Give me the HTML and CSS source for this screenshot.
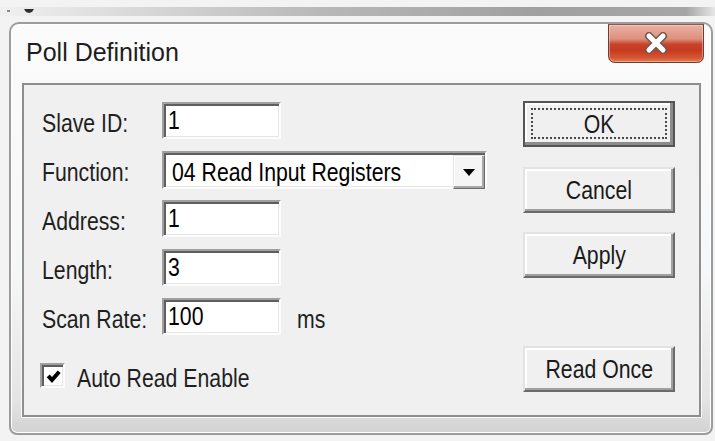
FILE: index.html
```html
<!DOCTYPE html>
<html lang="en">
<head>
<meta charset="utf-8">
<title>Poll Definition</title>
<link rel="stylesheet" href="styles.css">
</head>
<body>
<div class="desk">
  <div class="strip">
    <div class="strip-bar">
      <svg class="strip-icons" width="30" height="6" viewBox="0 0 30 6" aria-hidden="true">
        <rect x="0" y="2" width="3" height="2" fill="#8a8a8a"/>
        <path d="M17 1 L27 1 L25 4 L22 5 L19 4 Z" fill="#2e2e2e"/>
      </svg>
    </div>
  </div>

  <div class="window">
    <div class="titlebar">
      <span class="title">Poll Definition</span>
      <button class="close" type="button" aria-label="Close">
        <svg width="26" height="22" viewBox="0 0 26 22" aria-hidden="true">
          <path d="M6 4 L20 18 M20 4 L6 18" stroke="#6b5a58" stroke-width="8" stroke-linecap="round"/>
          <path d="M6 4 L20 18 M20 4 L6 18" stroke="#ffffff" stroke-width="5" stroke-linecap="round"/>
        </svg>
      </button>
    </div>

    <div class="client">
      <div class="form">
        <div class="row">
          <span class="lbl"><span class="t">Slave ID:</span></span>
          <div class="edit"><span class="t">1</span></div>
        </div>
        <div class="row">
          <span class="lbl"><span class="t">Function:</span></span>
          <div class="combo">
            <span class="combo-text"><span class="t">04 Read Input Registers</span></span>
            <span class="combo-btn">
              <svg width="12" height="7" viewBox="0 0 12 7" aria-hidden="true"><path d="M0 0 H12 L6 7 Z" fill="#000"/></svg>
            </span>
          </div>
        </div>
        <div class="row">
          <span class="lbl"><span class="t">Address:</span></span>
          <div class="edit"><span class="t">1</span></div>
        </div>
        <div class="row">
          <span class="lbl"><span class="t">Length:</span></span>
          <div class="edit"><span class="t">3</span></div>
        </div>
        <div class="row">
          <span class="lbl"><span class="t">Scan Rate:</span></span>
          <div class="edit"><span class="t">100</span></div>
          <span class="unit"><span class="t">ms</span></span>
        </div>
        <div class="check-row">
          <span class="checkbox">
            <svg width="17" height="17" viewBox="0 0 17 17" aria-hidden="true"><path d="M3.2 7.8 L7 12 L14.2 3.8" fill="none" stroke="#000" stroke-width="4"/></svg>
          </span>
          <span class="check-label"><span class="t">Auto Read Enable</span></span>
        </div>
      </div>

      <div class="buttons">
        <button class="btn default" type="button"><span class="t">OK</span></button>
        <button class="btn cancel" type="button"><span class="t">Cancel</span></button>
        <button class="btn apply" type="button"><span class="t">Apply</span></button>
        <button class="btn read-once" type="button"><span class="t">Read Once</span></button>
      </div>
    </div>
  </div>
</div>
</body>
</html>
```

FILE: styles.css
```css
* { box-sizing: border-box; }

html, body {
  margin: 0;
  padding: 0;
}

body {
  width: 715px;
  height: 441px;
  overflow: hidden;
  background: #f3f3f3;
  font-family: "Liberation Sans", Arial, sans-serif;
  font-size: 25px;
  color: #1c1c1c;
}

/* dialog font is a tall, narrow sans: squeeze each run horizontally */
.t {
  display: inline-block;
  white-space: nowrap;
  transform: scaleX(0.85);
  transform-origin: 0 50%;
}

/* parent application strip behind the dialog */
.strip {
  height: 22px;
  padding-top: 7px;
}

.strip-bar {
  height: 9px;
  background: linear-gradient(90deg, #f0f0f0 0%, #dadada 18%, #b8b8b8 45%, #a0a0a0 75%, #a6a6a6 96%, #e6e6e6 100%);
  padding: 1px 0 0 7px;
}

.strip-icons { display: block; }

/* dialog window frame */
.window {
  margin-left: 9px;
  width: 704px;
  height: 413px;
  border: 2px solid #9c9c9c;
  border-radius: 10px 10px 8px 8px;
  background: linear-gradient(180deg, #fbfbfc 0%, #f6f7f8 60%, #e4e4e4 92%, #d2d2d2 100%);
  box-shadow: inset 0 0 0 1px #ffffff;
  padding: 0 10px 0 11px;
  display: flex;
  flex-direction: column;
}

.titlebar {
  height: 59px;
  display: flex;
  justify-content: space-between;
  align-items: flex-start;
}

.title {
  font-size: 25px;
  color: #1d1d1d;
  padding: 14px 0 0 4px;
}

.close {
  width: 96px;
  height: 39px;
  margin-right: -3px;
  padding: 0;
  border: 1px solid #6d3b33;
  border-top-color: #8d5a52;
  border-radius: 0 0 7px 7px;
  background: linear-gradient(180deg, #eab1a4 0%, #dd8f7c 38%, #c8432a 52%, #c63a20 68%, #d5552f 88%, #e4794f 100%);
  box-shadow: inset 0 0 0 1px rgba(255, 220, 210, 0.45);
  display: flex;
  align-items: center;
  justify-content: center;
}

.close svg { display: block; margin-top: -1px; }

/* gray client area */
.client {
  height: 334px;
  border: 2px solid #8e8e8e;
  background: #f0f0f0;
  box-shadow: 0 0 0 1px #fafafa;
  padding: 17px 24px 0 18px;
  display: flex;
  justify-content: space-between;
  align-items: flex-start;
}

.form {
  display: flex;
  flex-direction: column;
  gap: 12px;
}

.row {
  display: flex;
  align-items: flex-start;
  height: 37px;
}

.lbl {
  flex: none;
  width: 120px;
  min-width: 0;
  line-height: 37px;
  padding-top: 3px;
  color: #1f1f1f;
}

/* sunken edit field */
.edit,
.combo,
.checkbox {
  background: #ffffff;
  border: 2px solid;
  border-color: #a0a0a0 #fcfcfc #fcfcfc #a0a0a0;
  box-shadow: inset 2px 2px 0 #5e5e5e, inset -1px -1px 0 #e6e6e6;
}

.edit {
  flex: none;
  width: 119px;
  height: 37px;
  line-height: 33px;
  padding-left: 4px;
  color: #000;
}

.unit {
  line-height: 37px;
  padding: 3px 0 0 16px;
  color: #1f1f1f;
}

.combo {
  width: 325px;
  height: 38px;
  display: flex;
  padding: 2px 0 0 2px;
}

.combo-text {
  flex: 1;
  line-height: 34px;
  padding-left: 6px;
  color: #000;
}

.combo-btn {
  width: 32px;
  height: 34px;
  background: #f5f5f5;
  border: 1px solid;
  border-color: #e4e4e4 #6a6a6a #6a6a6a #e4e4e4;
  box-shadow: inset -2px -2px 0 #a8a8a8, inset 1px 1px 0 #fff;
  display: flex;
  align-items: center;
  justify-content: center;
}

.combo-btn svg { display: block; }

.check-row {
  display: flex;
  align-items: flex-start;
  margin: 16px 0 0 -2px;
}

.checkbox {
  width: 25px;
  height: 25px;
  padding: 3px 0 0 3px;
}

.checkbox svg { display: block; }

.check-label {
  line-height: 25px;
  padding: 3px 0 0 12px;
  color: #1f1f1f;
}

/* push buttons */
.buttons {
  width: 152px;
  display: flex;
  flex-direction: column;
}

.btn {
  font: inherit;
  color: #1a1a1a;
  width: 152px;
  height: 46px;
  padding: 0;
  line-height: 42px;
  background: #f0f0f0;
  border: 2px solid;
  border-color: #e2e2e2 #6a6a6a #6a6a6a #e2e2e2;
  box-shadow: inset -2px -2px 0 #a0a0a0, inset 2px 2px 0 #ffffff;
}

.btn .t { transform-origin: 50% 50%; }

.btn.default {
  position: relative;
  margin-top: -1px;
  border-color: #555555;
  box-shadow: inset -3px -3px 0 #8c8c8c, inset 2px 2px 0 #fdfdfd;
}

/* keyboard focus rectangle on the default button */
.btn.default::after {
  content: "";
  position: absolute;
  inset: 5px 6px 6px 6px;
  border: 2px dotted #4a4a4a;
}

.btn.cancel { margin-top: 20px; }
.btn.apply { margin-top: 19px; }
.btn.read-once { margin-top: 68px; }
```
